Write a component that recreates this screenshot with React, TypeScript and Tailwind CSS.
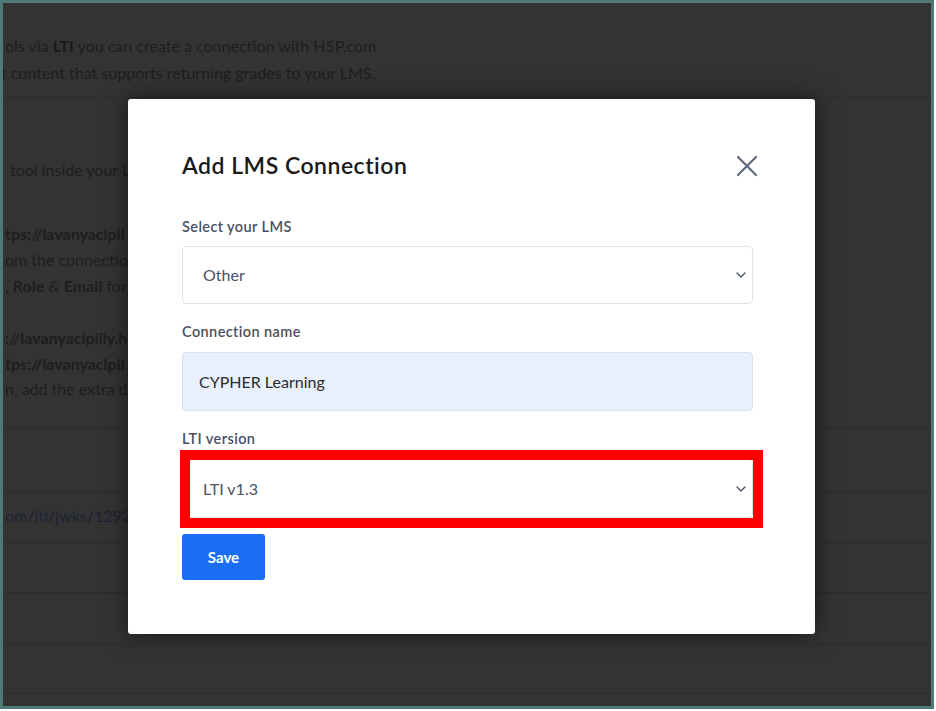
import React from "react";

const font = { fontFamily: "Lato, 'Noto Sans', sans-serif" };

function Chevron() {
  return (
    <svg width="10" height="6" viewBox="0 0 10 6" className="shrink-0">
      <polyline points="1,1 5,5 9,1" fill="none" stroke="#4b5563" strokeWidth="1.4" strokeLinecap="round" strokeLinejoin="round" />
    </svg>
  );
}

export default function App() {
  return (
    <div className="w-[936px] h-[711px] bg-white" style={font}>
      <div className="relative w-[934px] h-[709px] border-[3px] border-[#4d7a77] bg-[#333333] overflow-hidden text-[16px] text-[#1e1e1e]">
        {/* background page */}
        <div className="flex flex-col">
          <div className="h-[95px] border-b border-[#2c2c2c] pt-[29px] pl-[2px] leading-[27px] whitespace-nowrap">
            <div>ols via <b className="text-[#1a1a1a]">LTI</b> you can create a connection with H5P.com</div>
            <div className="-ml-[4px]">t content that supports returning grades to your LMS.</div>
          </div>
          <div className="h-[330px] border-b border-[#2c2c2c] pl-[2px] whitespace-nowrap leading-[26px]">
            <div className="pt-[59px] pl-[5px]">tool inside your L</div>
            <div className="pt-[38px] font-bold">tps://lavanyaclpil</div>
            <div>om the connection</div>
            <div>, <b>Role</b> &amp; <b>Email</b> for</div>
            <div className="pt-[26px] font-bold">://lavanyaclpilly.h</div>
            <div className="font-bold">tps://lavanyaclpil</div>
            <div className="leading-[24px]">n, add the extra d</div>
          </div>
          <div className="h-[64px] border-b border-[#2c2c2c]" />
          <div className="h-[51px] border-b border-[#2c2c2c] pl-[2px] pt-[11px] leading-[26px] text-[#1c2233] whitespace-nowrap">
            om/lti/jwks/129200
          </div>
          <div className="h-[50px] border-b border-[#2c2c2c]" />
          <div className="h-[52px] border-b border-[#2c2c2c]" />
          <div className="h-[49px] border-b border-[#2c2c2c]" />
        </div>

        {/* modal */}
        <div className="absolute left-[125px] top-[96px] w-[687px] bg-white rounded-[3px] shadow-[0_0_24px_rgba(0,0,0,0.55)] pl-[54px] pr-[62px] pt-[51px] pb-[54px]">
          <div className="flex items-center justify-between h-[30px]">
            <div className="text-[23px] leading-[30px] font-semibold text-[#1a1a1a] tracking-[0.5px]">Add LMS Connection</div>
            <svg width="22" height="22" viewBox="0 0 22 22" className="-mr-[5px] mt-[2px]">
              <path d="M2 2 L20 20 M20 2 L2 20" stroke="#5f6b7a" strokeWidth="2.2" strokeLinecap="round" />
            </svg>
          </div>

          <div className="mt-[37px] text-[14.5px] leading-[20px] font-semibold text-[#4a5160] tracking-[0.4px]">Select your LMS</div>
          <div className="mt-[9px] h-[58px] border-[1.5px] border-[#dde3ec] rounded-[4px] flex items-center justify-between pl-[20px] pr-[6px] text-[16px] text-[#4a5160]">
            <span>Other</span>
            <Chevron />
          </div>

          <div className="mt-[18px] text-[14.5px] leading-[20px] font-semibold text-[#4a5160] tracking-[0.4px]">Connection name</div>
          <div className="mt-[10px] h-[59px] border-[1.5px] border-[#d8e0ec] bg-[#e8f0fe] rounded-[4px] flex items-center pl-[16px] text-[16px] text-[#2b2b2b]">
            CYPHER Learning
          </div>

          <div className="mt-[18px] text-[14.5px] leading-[20px] font-semibold text-[#4a5160] tracking-[0.4px]">LTI version</div>
          <div className="relative mt-[10px]">
            <div className="h-[59px] border-[1.5px] border-[#dde3ec] rounded-[4px] flex items-center justify-between pl-[20px] pr-[6px] text-[16px] text-[#4a5160]">
              <span>LTI v1.3</span>
              <Chevron />
            </div>
            <div className="absolute -left-[2px] -top-[9px] -right-[10px] -bottom-[10px] border-[10px] border-[#ff0000]" />
          </div>

          <div className="mt-[16px] w-[83px] h-[46px] bg-[#1a6ef5] rounded-[3px] flex items-center justify-center text-white text-[15px] font-bold">
            Save
          </div>
        </div>
      </div>
    </div>
  );
}
